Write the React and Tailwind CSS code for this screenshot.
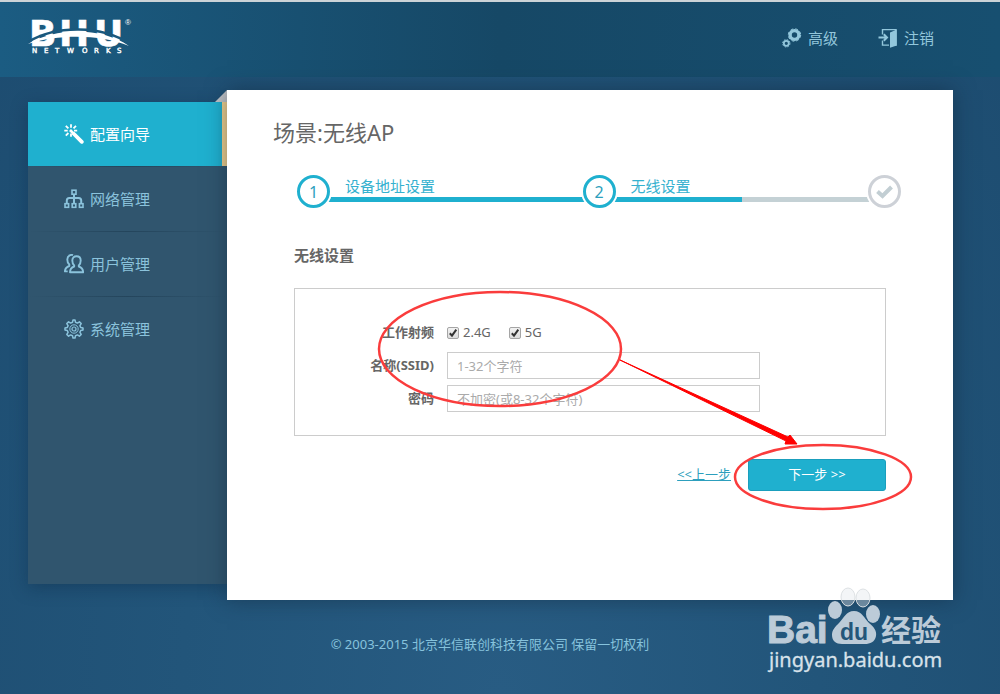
import React from "react";

const navItems = [
  { name: "配置向导", icon: WandIcon, active: true },
  { name: "网络管理", icon: NetworkIcon },
  { name: "用户管理", icon: UsersIcon },
  { name: "系统管理", icon: SettingsIcon },
];

function WandIcon() {
  return (
    <svg width="20" height="20" viewBox="0 0 20 20" fill="none" stroke="currentColor" strokeWidth="1.8">
      <path d="M7 0.3v3.4M7 9.5v3.2M0.3 6.6h3.4M10 6.6h3.2M1.8 1.8l2.6 2.6M12 1.8L9.5 4.3M1.8 11.6l2.6-2.6" />
      <path d="M6 6l4 4" strokeWidth="2.6" />
      <path d="M10 10l7.8 7.8" strokeWidth="3.8" strokeLinecap="round" />
    </svg>
  );
}

function NetworkIcon() {
  return (
    <svg width="20" height="20" viewBox="0 0 20 20" fill="none" stroke="currentColor" strokeWidth="1.6">
      <rect x="8" y="1.2" width="4" height="4" />
      <rect x="1" y="14.7" width="3.6" height="3.6" />
      <rect x="8.2" y="14.7" width="3.6" height="3.6" />
      <rect x="15.4" y="14.7" width="3.6" height="3.6" />
      <path d="M10 5.5v9M2.8 14.5v-3q0-2.5 2.5-2.5h9.4q2.5 0 2.5 2.5v3" strokeWidth="2" />
    </svg>
  );
}

function UsersIcon() {
  return (
    <svg width="20" height="20" viewBox="0 0 20 20" fill="none" stroke="currentColor" strokeWidth="1.9" strokeLinejoin="round">
      <path d="M12.5 2.2c2.6 0 4.2 1.7 4.2 4.4 0 2-.7 3.8-1.9 4.9v1c2.6.9 4.3 2.4 4.3 5.8H6c0-3.4 1.6-4.9 4.2-5.8v-1C9 10.4 8.3 8.6 8.3 6.6c0-2.7 1.6-4.4 4.2-4.4z" />
      <path d="M9 1.2C7.5.4 3.4 1.2 3.3 5.6c0 2.2.7 3.9 2 5V12C2.5 12.9 1 14.6.9 17.4h2.8" />
    </svg>
  );
}

function SettingsIcon() {
  return (
    <svg width="20" height="20" viewBox="0 0 20 20" fill="none" stroke="currentColor" strokeWidth="1.5" strokeLinejoin="round">
      <path d="M8.5 3.3L9 1h2l.5 2.3 1.9.8 2-1.3 1.8 1.8-1.3 2 .8 1.9L19 9v2l-2.3.5-.8 1.9 1.3 2-1.8 1.8-2-1.3-1.9.8L11 19H9l-.5-2.3-1.9-.8-2 1.3-1.8-1.8 1.3-2-.8-1.9L1 11V9l2.3-.5.8-1.9-1.3-2 1.8-1.8 2 1.3z" />
      <circle cx="10" cy="10" r="4.2" strokeWidth="1" />
      <circle cx="10" cy="10" r="2" strokeWidth="1.2" />
    </svg>
  );
}

function GearsIcon() {
  return (
    <svg width="20" height="20" viewBox="0 0 20 20" fill="none" stroke="currentColor">
      <circle cx="12.5" cy="7" r="4.4" strokeWidth="3.4" />
      <circle cx="12.5" cy="7" r="6.2" strokeWidth="1" strokeDasharray="2.8 2.07" />
      <circle cx="4.3" cy="15.3" r="2.5" strokeWidth="1.8" />
      <circle cx="4.3" cy="15.3" r="3.7" strokeWidth="1" strokeDasharray="1.6 1.3" />
    </svg>
  );
}

function LogoutIcon() {
  return (
    <svg width="20" height="20" viewBox="0 0 20 20" fill="none" stroke="currentColor">
      <path d="M4.5 6.5V1.6H18v15.5h-6M4.5 12.5v4.6H11" strokeWidth="1.4" />
      <path d="M18.7 1.5v16L12 19.7V4.5z" fill="currentColor" stroke="none" />
      <path d="M0.5 9.5h8M5.8 6.3L9 9.5l-3.2 3.2" strokeWidth="2" />
    </svg>
  );
}

function Logo() {
  return (
    <svg className="overflow-visible" width="106" height="42" viewBox="0 0 106 42" fill="white" role="img" aria-label="BHU Networks">
      <text x="1 31 66" y="29" fontFamily="DejaVu Sans" fontWeight="700" fontSize="36" stroke="white" strokeWidth="0.6">BHU</text>
      <path d="M0 25C28 8 74 8 102 27" fill="none" stroke="#1a587d" strokeWidth="2.4" />
      <path d="M0 27C28 10 74 10 101 29C72 17 31 17 0 27z" />
      <text x="4 16 27 39 54 66 78 89" y="36" fontFamily="DejaVu Sans" fontSize="7" stroke="white" strokeWidth="0.4">NETWORKS</text>
      <text x="97" y="8" fontFamily="Liberation Sans" fontSize="8">®</text>
    </svg>
  );
}

function StepCircle({ children, done }) {
  return (
    <span
      className={
        done
          ? "relative z-10 flex size-[33px] shrink-0 items-center justify-center rounded-full border-[3px] border-[#cdd1d7] bg-white ring-2 ring-white"
          : "relative z-10 flex size-[33px] shrink-0 items-center justify-center rounded-full border-[3px] border-[#1fb0cf] bg-white text-base text-[#2d9fbd] ring-2 ring-white"
      }
    >
      {children}
    </span>
  );
}

function RadioBand({ label }) {
  return (
    <label className="flex items-center gap-1">
      <span className="relative flex size-3">
        <input type="checkbox" defaultChecked className="peer size-3 appearance-none rounded-xs border border-[#a5a5a5] bg-linear-to-b from-[#f2f2f2] to-[#dcdcdc]" />
        <svg viewBox="0 0 12 12" className="pointer-events-none absolute inset-0 hidden size-3 peer-checked:block" fill="none" stroke="#333" strokeWidth="2">
          <path d="M2.8 6.2L5 8.6l4.3-6" />
        </svg>
      </span>
      {label}
    </label>
  );
}

// red marks that point the reader from the form to the next button
function Annotations() {
  return (
    <svg className="pointer-events-none absolute top-0 left-0 z-20" width="726" height="510" fill="none" stroke="#fa3c3c" strokeWidth="2.5">
      <ellipse cx="273" cy="259" rx="121" ry="57" />
      <ellipse cx="596" cy="387" rx="88" ry="32" />
      <path d="M393 270L559 351L558 354L570 354L563 345L561 347z" fill="#ff0000" stroke="#ff0000" strokeWidth="1" />
    </svg>
  );
}

function Watermark() {
  return (
    <svg className="pointer-events-none absolute right-[46px] bottom-3.5 z-30" width="190" height="94" viewBox="0 0 190 94" fill="#bccbd8">
      <text x="3" y="57" fontFamily="Liberation Sans" fontWeight="700" fontSize="39" stroke="#bccbd8">Bai</text>
      <ellipse cx="71" cy="24" rx="7" ry="9" />
      <ellipse cx="84" cy="11" rx="7" ry="9" fill="#e2e6ea" fillOpacity="0.4" stroke="#dde1e4" />
      <ellipse cx="99" cy="12" rx="7" ry="9" fill="#e2e6ea" fillOpacity="0.4" stroke="#dde1e4" />
      <ellipse cx="109" cy="28" rx="7" ry="9" />
      <path d="M90 25c8 0 10 7 15 12 5 4 8 8 7 13-1 6-6 8-11 8H78c-6 0-10-3-10-9 0-5 3-8 7-12 5-5 7-12 15-12z" />
      <text x="76" y="54" fill="#24567a" fontFamily="Liberation Sans" fontWeight="700" fontSize="23">du</text>
      <text x="117" y="55" fontFamily="Noto Sans CJK SC" fontWeight="700" fontSize="30">经验</text>
      <text x="5" y="81" fill="#d8e2ea" fontFamily="Noto Sans" fontSize="20" stroke="#d8e2ea" strokeWidth="0.3">jingyan.baidu.com</text>
    </svg>
  );
}

export default function App() {
  return (
    <div className="relative min-h-screen bg-[#1f4e73] bg-[radial-gradient(ellipse_at_50%_100%,#285c83_0%,#22557a_45%,#1d4c70_100%)] font-['Noto_Sans','Noto_Sans_CJK_SC',sans-serif] text-[13px] text-[#666]">
      <header className="flex h-[77px] items-center justify-between border-t-2 border-[#ccd3d7] bg-linear-to-r from-[#1b5c82] via-[#164866] to-[#174f70] pr-[66px] pb-1 pl-7">
        <a href="#home">
          <Logo />
        </a>
        <div className="flex items-center gap-10 text-[15px] leading-5 text-[#93c7dc]">
          <a href="#advanced" className="flex items-center gap-1.5">
            <GearsIcon />
            高级
          </a>
          <a href="#logout" className="flex items-center gap-1.5">
            <LogoutIcon />
            注销
          </a>
        </div>
      </header>

      <main className="flex pt-[13px] pr-[47px] pl-7">
        {/* Sidebar */}
        <nav className="relative mt-3 mb-4 w-[199px] shrink-0 bg-[#30556e] shadow-[0_4px_16px_rgba(10,35,60,0.35)]">
          {navItems.map(({ name, icon: Icon, active }) => (
            <div key={name}>
              <a
                href="#nav"
                className={
                  active
                    ? "flex h-16 items-center gap-1.5 border-r-[5px] border-[#f5d28e] bg-[#1fb0cf] pl-9 text-[15px] text-white"
                    : "flex h-16 items-center gap-1.5 pl-9 text-[15px] text-[#8bc3dc]"
                }
              >
                <Icon />
                {name}
              </a>
              <div className={name === "系统管理" ? "hidden" : "h-px bg-linear-to-r from-transparent via-[#24455c] to-transparent"} />
            </div>
          ))}
          <svg className="absolute -top-3 right-0" width="12" height="12" fill="#c2c3c6">
            <path d="M12 0v12H0z" />
          </svg>
        </nav>

        {/* Wizard panel */}
        <section className="relative min-h-[510px] min-w-0 flex-1 bg-white pt-[26px] shadow-[0_0_20px_rgba(15,35,55,0.5)]">
          <h1 className="pl-[46px] text-[22px] leading-8">场景:无线AP</h1>

          <div className="mt-[27px] flex pr-[52px] pl-[70px] text-[15px] leading-[22px] text-[#35b1cf]">
            <StepCircle>1</StepCircle>
            <div className="-mx-1 flex-1">
              <p className="pl-[19px]">设备地址设置</p>
              <div className="h-[5px] bg-[#1fb0cf]" />
            </div>
            <StepCircle>2</StepCircle>
            <div className="-mx-1 flex-1">
              <p className="pl-[19px]">无线设置</p>
              <div className="h-[5px] bg-[#c4d1d5]">
                <div className="h-full w-1/2 bg-[#1fb0cf]" />
              </div>
            </div>
            <StepCircle done>
              <svg width="17" height="14" viewBox="0 0 17 14" fill="none" stroke="#c2ced3" strokeWidth="4">
                <path d="M1.5 6.5L6.500 11L15.500 2" />
              </svg>
            </StepCircle>
          </div>

          <form className="px-[67px] pt-[35px]">
            <h2 className="text-[15px] leading-6 font-bold">无线设置</h2>
            <div className="mt-[21px] flex flex-col gap-1.5 border border-[#ccc] pt-[30px] pb-[23px]">
              <div className="flex h-[27px] items-center gap-[13px]" role="group" aria-labelledby="band">
                <span id="band" className="w-[139px] text-right font-bold">工作射频</span>
                <div className="flex gap-[18px]">
                  <RadioBand label="2.4G" />
                  <RadioBand label="5G" />
                </div>
              </div>
              <div className="flex h-[27px] items-center gap-[13px]">
                <label htmlFor="ssid" className="w-[139px] text-right font-bold">名称(SSID)</label>
                <input id="ssid" type="text" placeholder="1-32个字符" className="h-full w-[313px] border border-[#ccc] bg-white px-[9px] placeholder:text-[#aaa]" />
              </div>
              <div className="flex h-[27px] items-center gap-[13px]">
                <label htmlFor="password" className="w-[139px] text-right font-bold">密码</label>
                <input id="password" type="text" placeholder="不加密(或8-32个字符)" className="h-full w-[313px] border border-[#ccc] bg-white px-[9px] placeholder:text-[#aaa]" />
              </div>
            </div>
            <div className="mt-[23px] flex items-center justify-end gap-[17px]">
              <a href="#prev" className="text-[#2d9fbd] underline">&lt;&lt;上一步</a>
              <button type="button" className="h-8 w-[138px] rounded-[3px] border border-[#1a9fbd] bg-[#1fb0cf] text-white">下一步 &gt;&gt;</button>
            </div>
          </form>
          <Annotations />
        </section>
      </main>

      <footer className="pt-[34px] pr-5 pb-10 text-center leading-5 text-[#86c3dd]">
        © 2003-2015 北京华信联创科技有限公司 保留一切权利
      </footer>
      <Watermark />
    </div>
  );
}
